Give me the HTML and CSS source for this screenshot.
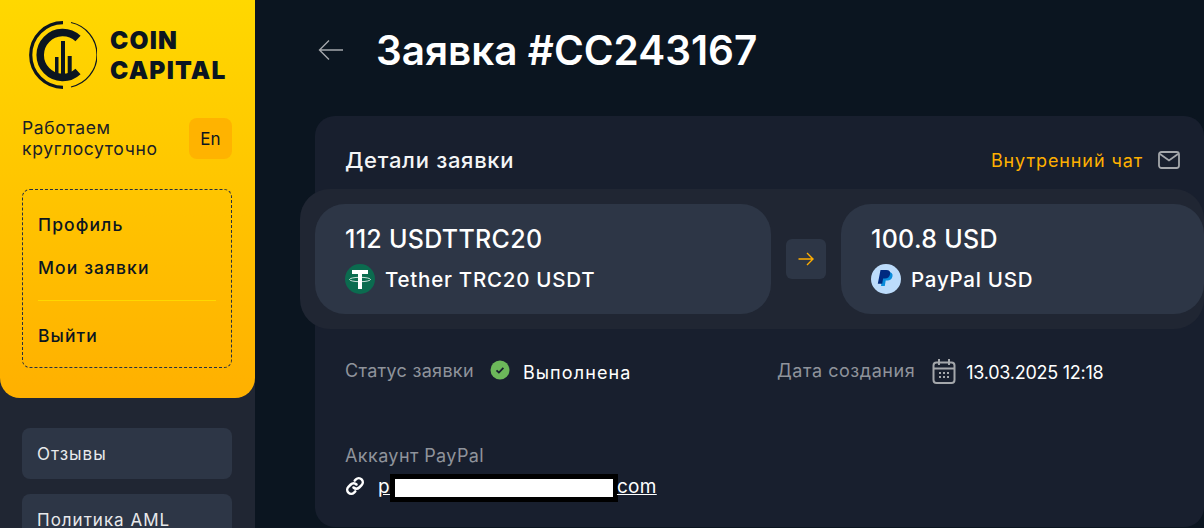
FILE: index.html
```html
<!DOCTYPE html>
<html lang="ru">
<head>
<meta charset="utf-8">
<title>Заявка #CC243167</title>
<link rel="stylesheet" href="styles.css">
</head>
<body>
<div class="page">
  <aside class="sidebar">
    <div class="panel">
      <div class="logo">
        <svg class="logo-mark" width="68" height="68" viewBox="0 0 68 68">
          <path d="M34 1.700A32.300 32.300 0 0 0 34 66.300" fill="none" stroke="#0b1520" stroke-width="3.200"/>
          <path d="M42 1.500A33 33 0 0 1 42 66" fill="none" stroke="#0b1520" stroke-width="1.200"/>
          <path d="M49 17.500A22.500 22.500 0 1 0 49 50.500" fill="none" stroke="#0b1520" stroke-width="7.500"/>
          <path d="M26 36h3.500v17H26zM32 20h4v34h-4zM38.700 35h4v18h-4z" fill="#0b1520"/>
        </svg>
        <div class="logo-text">COIN<br>CAPITAL</div>
      </div>
      <div class="hours">
        <div class="hours-text">Работаем<br>круглосуточно</div>
        <div class="lang">En</div>
      </div>
      <nav class="menu">
        <a class="menu-item">Профиль</a>
        <a class="menu-item">Мои заявки</a>
        <div class="menu-line"></div>
        <a class="menu-item">Выйти</a>
      </nav>
    </div>
    <div class="links">
      <a class="side-link">Отзывы</a>
      <a class="side-link">Политика AML</a>
    </div>
  </aside>
  <main class="main">
    <header class="head">
      <svg class="back" width="26" height="22" viewBox="0 0 26 22"><path d="M25 11H2M11 1.500 1.500 11 11 20.500" fill="none" stroke="#a4a7ab" stroke-width="1.400"/></svg>
      <h1 class="title">Заявка #CC243167</h1>
    </header>
    <section class="card">
      <div class="card-head">
        <h2 class="card-title">Детали заявки</h2>
        <a class="chat">Внутренний чат
          <svg width="22" height="18" viewBox="0 0 22 18"><rect x="1" y="1" width="20" height="16" rx="2.500" fill="none" stroke="#a4a7ab" stroke-width="1.800"/><path d="M2 3l9 6.500L20 3" fill="none" stroke="#a4a7ab" stroke-width="1.800"/></svg>
        </a>
      </div>
      <div class="band">
        <div class="tile">
          <div class="amount">112 USDTTRC20</div>
          <div class="coin">
            <svg width="30" height="30" viewBox="0 0 30 30"><circle cx="15" cy="15" r="15" fill="#0b6b4f"/><ellipse cx="15" cy="15.500" rx="10.500" ry="2.200" fill="none" stroke="#fff" stroke-width=".8"/><path d="M7 6h16v4h-6v15h-4V10H7z" fill="#fff"/></svg>
            <span>Tether TRC20 USDT</span>
          </div>
        </div>
        <div class="arrow">
          <svg width="16" height="14" viewBox="0 0 16 14"><path d="M.5 7h14M9 1l6 6-6 6" fill="none" stroke="#ffae00" stroke-width="1.400"/></svg>
        </div>
        <div class="tile tile-right">
          <div class="amount">100.8 USD</div>
          <div class="coin">
            <svg width="30" height="30" viewBox="0 0 30 30"><circle cx="15" cy="15" r="15" fill="#bcdcfb"/><path d="M12 8h5.500c3 0 4.500 1.700 4 4.300-.6 2.900-2.500 4.200-5.200 4.200h-1.600l-.9 5.500H10z" fill="#0a8ddb"/><path d="M9.500 6h5.800c3 0 4.300 1.600 3.800 4.200-.6 2.800-2.500 4.300-5.200 4.300h-1.800l-.9 5.200H6.800z" fill="#002a80"/></svg>
            <span>PayPal USD</span>
          </div>
        </div>
      </div>
      <div class="facts">
        <div class="fact fact-status">
          <span class="label status-label">Статус заявки</span>
          <svg class="fact-icon status-icon" width="20" height="20" viewBox="0 0 20 20"><circle cx="10" cy="10" r="9.500" fill="#6cb85a"/><path d="M6.500 10.300l2.400 2.300 4.500-4.700" fill="none" stroke="#18202f" stroke-width="1.800"/></svg>
          <span class="value status-value">Выполнена</span>
        </div>
        <div class="fact">
          <span class="label date-label">Дата создания</span>
          <svg class="fact-icon date-icon" width="24" height="25" viewBox="0 0 24 25"><rect x="1.500" y="3.500" width="21" height="20.500" rx="3" fill="none" stroke="#a4a7ab" stroke-width="2"/><path d="M1.500 9.500h21M7 0v6M17 0v6" fill="none" stroke="#a4a7ab" stroke-width="2"/><path d="M7 13h2v2H7zM11 13h2v2h-2zM15 13h2v2h-2zM7 17h2v2H7zM11 17h2v2h-2zM15 17h2v2h-2z" fill="#a4a7ab"/></svg>
          <span class="value date-value">13.03.2025 12:18</span>
        </div>
      </div>
      <div class="account">
        <div class="label">Аккаунт PayPal</div>
        <div class="account-row">
          <svg width="20" height="20" viewBox="0 0 20 20"><path d="M8.500 11.500a4 4 0 0 0 5.700 0l2.400-2.400a4 4 0 0 0-5.700-5.700L9.700 4.600M11.500 8.500a4 4 0 0 0-5.700 0L3.400 10.900a4 4 0 0 0 5.700 5.700l1.200-1.200" fill="none" stroke="#fff" stroke-width="2.500" stroke-linecap="round"/></svg>
          <a class="account-link">p<span class="redact"></span>com</a>
        </div>
      </div>
    </section>
  </main>
</div>
</body>
</html>
```

FILE: styles.css
```css
* { box-sizing: border-box; }
html, body { margin: 0; height: 528px; overflow: hidden; }
body { background: #0b1520; font-family: Inter, "Noto Sans", sans-serif; color: #fff; }
.page { display: flex; height: 528px; overflow: hidden; }

.sidebar { width: 255px; flex: none; background: #202633; }
.panel { height: 398px; padding: 21px 23px 0 22px; border-radius: 0 0 20px 20px; background: linear-gradient(#ffd800, #ffb000); color: #0b1520; }
.logo { display: flex; align-items: center; gap: 13px; padding-left: 7px; }
.logo-mark { flex: none; }
.logo-text { font-weight: 900; font-size: 24.500px; line-height: 30px; letter-spacing: 1.200px; }
.hours { display: flex; justify-content: space-between; align-items: flex-start; margin-top: 29px; }
.hours-text { font-size: 17.500px; line-height: 21px; letter-spacing: .65px; margin-top: -1px; color: #1a2027; }
.lang { width: 43px; height: 41px; border-radius: 8px; background: #ffb300; display: flex; align-items: center; justify-content: center; font-size: 17px; }
.menu { margin-top: 30px; height: 179px; padding: 13px 15px 0; border: 1px dashed #27303f; border-radius: 8px; display: flex; flex-direction: column; }
.menu-item { height: 43px; display: flex; align-items: center; font-size: 17.500px; font-weight: 500; letter-spacing: 1.100px; }
.menu-line { height: 1px; margin: 11px 0 13px; background: #ffd800; }

.links { padding: 30px 23px 0 22px; display: flex; flex-direction: column; gap: 15px; }
.side-link { height: 51px; padding-left: 15px; border-radius: 8px; background: #2d3646; display: flex; align-items: center; font-size: 17px; letter-spacing: 1px; color: #e8e9eb; flex: none; }

.main { flex: 1; min-width: 0; padding-left: 60px; }
.head { display: flex; align-items: center; height: 100px; gap: 32px; padding: 0 0 0 3px; }
.title { margin: 0; font-size: 40.500px; font-weight: 600; color: #fff; }
.card { width: 889px; height: 411px; margin-top: 16px; background: #181f2e; border-radius: 20px; position: relative; }
.card-head { height: 73px; padding: 15px 24px 0 30px; display: flex; align-items: center; justify-content: space-between; }
.card-title { margin: 0; font-size: 22px; font-weight: 500; letter-spacing: .7px; color: #f4f5f6; }
.chat { display: flex; align-items: center; gap: 15px; font-size: 18px; color: #ffb000; letter-spacing: .9px; }
.band { margin: 0 0 0 -15px; width: 904px; height: 140px; padding: 15px; background: #202633; border-radius: 30px; display: flex; gap: 15px; align-items: center; }
.tile { width: 456px; height: 110px; padding: 20px 30px 0; background: #2d3646; border-radius: 30px; flex: none; }
.tile-right { width: 363px; }
.amount { font-size: 25px; font-weight: 500; line-height: 31px; letter-spacing: .3px; }
.coin { display: flex; align-items: center; gap: 10px; margin-top: 9px; font-size: 20.500px; font-weight: 500; letter-spacing: .75px; }
.arrow { width: 40px; height: 40px; flex: none; border-radius: 6px; background: #2d3646; display: flex; align-items: center; justify-content: center; }
.facts { display: grid; grid-template-columns: 432px 1fr; padding: 29px 0 0 30px; }
.fact { display: flex; align-items: center; height: 26px; }
.label { font-size: 18px; letter-spacing: .4px; color: #8f939b; }
.fact .label { padding-bottom: 2px; margin-right: 17px; }
.fact .status-label { letter-spacing: .3px; margin-right: 16px; }
.fact .date-label { letter-spacing: .55px; }
.value { font-size: 18px; padding-top: 2px; color: #fff; }
.status-icon { margin: 0 13px 2px 0; }
.status-value { letter-spacing: 1.100px; }
.date-icon { margin-right: 10px; }
.date-value { letter-spacing: -.25px; }
.account { padding: 60px 0 0 30px; }
.account .label { line-height: 24px; }
.account-row { display: flex; align-items: center; gap: 13px; margin-top: 3px; height: 30px; }
.account-link { display: flex; align-items: center; font-size: 19px; letter-spacing: .3px; text-decoration: underline; height: 28px; }
.redact { width: 228px; height: 28px; border: 5px solid #000; background: #fff; margin: 4px -1px 0 0; display: block; flex: none; }
```
